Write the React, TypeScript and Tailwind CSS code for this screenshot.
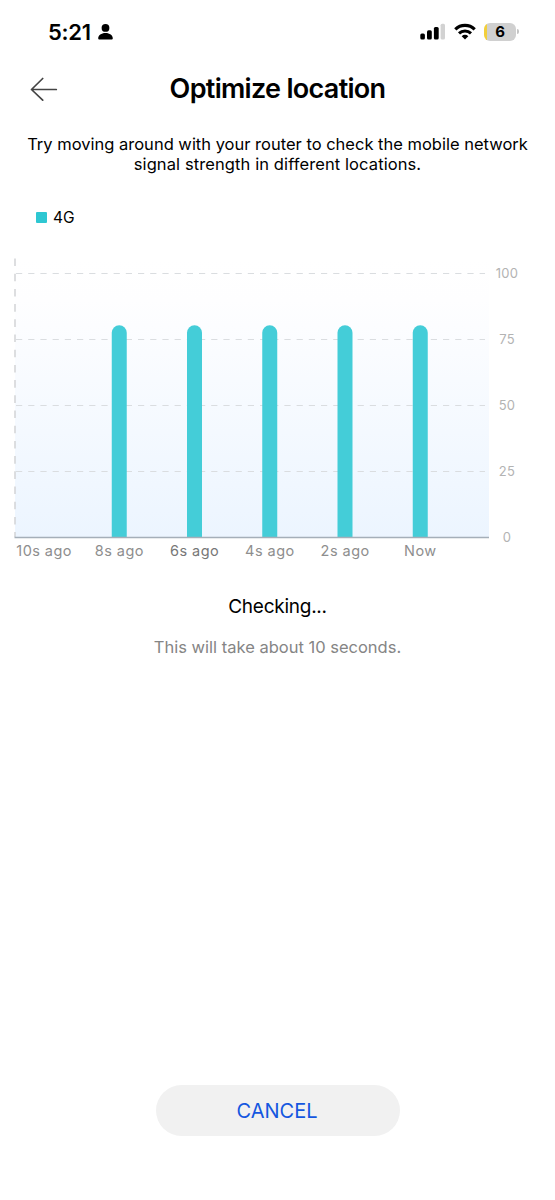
import { clsx } from 'clsx';

const samples = [
  { label: '10s ago', value: 0 },
  { label: '8s ago', value: 80 },
  { label: '6s ago', value: 80, active: true },
  { label: '4s ago', value: 80 },
  { label: '2s ago', value: 80 },
  { label: 'Now', value: 80 },
];

const ticks = [100, 75, 50, 25, 0];

const PLOT_BOTTOM = 279.5;
const UNIT = 2.64;
const STEP = 75.25;

function StatusBar() {
  return (
    <div className="flex h-[62px] items-center justify-between pl-12 pr-9 pt-[1px]">
      <div className="flex items-center gap-[7px]">
        <span className="text-[22px] font-semibold leading-none tracking-[-0.3px]">5:21</span>
        <svg width="15" height="16" viewBox="0 0 15 16" fill="#000">
          <circle cx="7.5" cy="3.9" r="3.9" />
          <path d="M0.2 14.2C0.2 11.3 3.3 9 7.5 9s7.3 2.3 7.3 5.2c0 .9-.5 1.4-1.4 1.4H1.6c-.9 0-1.4-.5-1.4-1.4z" />
        </svg>
      </div>
      <div className="flex items-center">
        <svg width="25" height="17" viewBox="0 0 25 17">
          <rect x="0.3" y="10.4" width="4.6" height="6.1" rx="1.5" />
          <rect x="7" y="7.3" width="4.8" height="9.2" rx="1.5" />
          <rect x="13.9" y="4" width="4.8" height="12.5" rx="1.5" />
          <rect x="20.6" y="0.8" width="4.4" height="15.7" rx="1.5" fill="#d2d2d2" />
        </svg>
        <svg className="ml-[9px]" width="22" height="17" viewBox="0 0 22 17" fill="none" stroke="#000">
          <path d="M1.3 6.3a13.9 13.9 0 0 1 19.4 0" strokeWidth="3.2" />
          <path d="M5 10.3a8.7 8.7 0 0 1 12 0" strokeWidth="3" />
          <path d="M11 16.6l-3.3-3.4a4.7 4.7 0 0 1 6.6 0z" fill="#000" stroke="none" />
        </svg>
        <div className="ml-2 flex h-[18px] w-8 items-center justify-center overflow-hidden rounded-[6px] bg-gradient-to-r from-[#f2cf3b] from-[10%] to-[#d0d0d0] to-[10%]">
          <span className="text-[15px] font-bold leading-none">6</span>
        </div>
        <div className="ml-[1px] h-[5px] w-[2px] rounded-r-full bg-[#c4c4c4]" />
      </div>
    </div>
  );
}

function SignalChart() {
  return (
    <div className="mt-[31px] pl-[14px]">
      <div className="flex">
        <svg width="476" height="281" viewBox="0 0 476 281" className="shrink-0">
          <defs>
            <linearGradient id="plotFill" x1="0" y1="0" x2="0" y2="1">
              <stop offset="0" stopColor="#ffffff" />
              <stop offset="0.15" stopColor="#fefeff" />
              <stop offset="1" stopColor="#ecf5ff" />
            </linearGradient>
          </defs>
          <rect x="1" y="0" width="474" height="279" fill="url(#plotFill)" />
          <path d="M1 0.5V279" stroke="#d2d4d6" strokeWidth="1.5" strokeDasharray="7.6 7.6" />
          {ticks.slice(0, -1).map((tick) => (
            <path
              key={tick}
              d={`M2 ${PLOT_BOTTOM - tick * UNIT}H471`}
              stroke="#dadde0"
              strokeWidth="1.2"
              strokeDasharray="6.2 6"
            />
          ))}
          {samples.map((sample, i) => {
            if (!sample.value) return null;
            const x = 30 + i * STEP - 7.5;
            const top = PLOT_BOTTOM - sample.value * UNIT - 1;
            return (
              <path
                key={sample.label}
                d={`M${x} ${PLOT_BOTTOM}V${top + 7.5}a7.5 7.5 0 0 1 15 0V${PLOT_BOTTOM}z`}
                fill="#44cdd8"
              />
            );
          })}
          <path d="M0.5 279.5H475" stroke="#a5afb9" strokeWidth="1.5" />
        </svg>
        <div className="flex w-[34px] flex-col pt-[6px]">
          {ticks.map((tick) => (
            <span key={tick} className="h-[66px] text-center text-[13px] leading-[18px] tracking-[0.3px] text-[#b3b3b3] last:h-[18px]">
              {tick}
            </span>
          ))}
        </div>
      </div>
      <div className="-ml-[7.5px] -mt-[5px] flex">
        {samples.map((sample) => (
          <span
            key={sample.label}
            className={clsx(
              'w-[75.25px] text-center text-[14.5px] leading-5 tracking-[0.45px]',
              sample.active ? 'text-[#777]' : 'text-[#8e8e8e]',
            )}
          >
            {sample.label}
          </span>
        ))}
      </div>
    </div>
  );
}

export default function App() {
  return (
    <div className="flex h-[1200px] w-[555px] flex-col bg-white font-['Inter',sans-serif] text-black">
      <StatusBar />

      <header className="flex h-[52px] items-center pl-[30px] pr-[58px]">
        <svg width="28" height="26" viewBox="0 0 28 26" fill="none" stroke="#444" strokeWidth="1.7" strokeLinecap="round" strokeLinejoin="round">
          <path d="M26.3 14.5H1.5M12.7 3.5L1.5 14.5L12.7 25.2" />
        </svg>
        <h1 className="flex-1 pt-[1px] text-center text-[27px] font-semibold leading-8 tracking-[-0.7px]">Optimize location</h1>
      </header>

      <p className="mt-5 text-center text-[16.5px] leading-5">
        Try moving around with your router to check the mobile network
        <br />
        <span className="tracking-[0.1px]">signal strength in different locations.</span>
      </p>

      <div className="mt-[33px] flex h-5 items-center gap-[6px] pl-9">
        <span className="h-[11px] w-[11px] rounded-[1px] bg-[#2ec7d2]" />
        <span className="pt-[1px] text-[15.5px] leading-5">4G</span>
      </div>

      <SignalChart />

      <div className="mt-[34px] text-center">
        <p className="text-[19px] leading-6 tracking-[-0.25px]">Checking...</p>
        <p className="mt-[18px] text-[16.5px] leading-5 text-[#858585]">This will take about 10 seconds.</p>
      </div>

      <button className="mx-auto mb-16 mt-auto h-[51px] w-[244px] rounded-full bg-[#f1f1f1] pr-[1px] text-[20px] text-[#1457e0]">
        CANCEL
      </button>
    </div>
  );
}
